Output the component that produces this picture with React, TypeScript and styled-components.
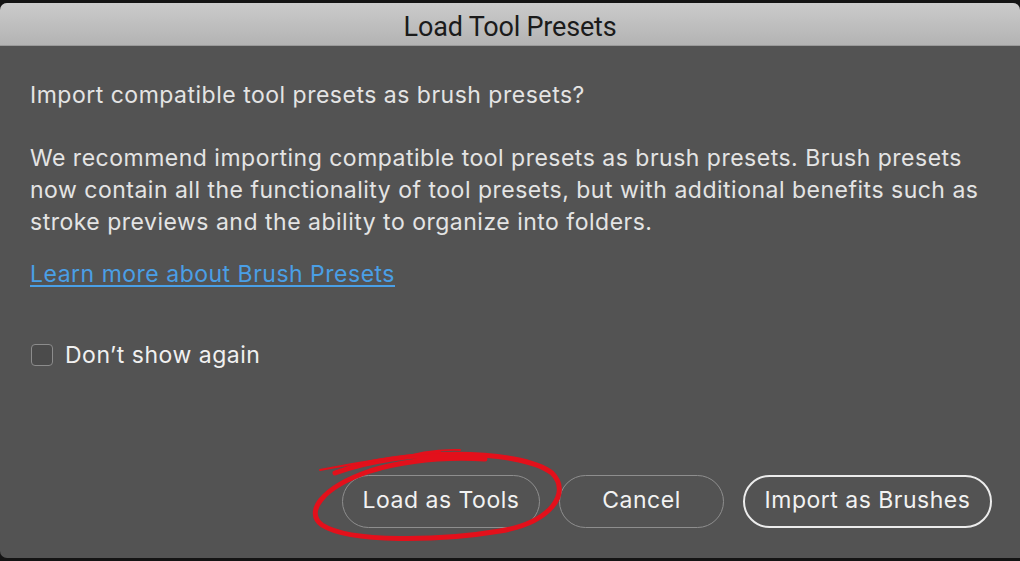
import React from "react";
import styled, { createGlobalStyle } from "styled-components";

const Global = createGlobalStyle`
  html, body { margin: 0; padding: 0; background: #141414; }
  body { font-family: "Inter", "Liberation Sans", sans-serif; }
`;

const Page = styled.div`
  width: 1020px;
  height: 561px;
  overflow: hidden;
  background: #141414;
  padding-top: 3px;
  box-sizing: border-box;
`;

const Window = styled.div`
  position: relative;
  width: 1020px;
  height: 555px;
  display: flex;
  flex-direction: column;
  background: #535353;
  border-radius: 7px 7px 0 7px;
  overflow: hidden;
`;

const TitleBar = styled.div`
  height: 43px;
  flex: none;
  display: flex;
  align-items: center;
  justify-content: center;
  background: linear-gradient(#cbcbcb, #b3b3b3);
  border-bottom: 1px solid #9a9a9a;
  font-family: "Roboto", "Liberation Sans", sans-serif;
  font-size: 27px;
  color: #1b1b1b;
  letter-spacing: -0.2px;
  padding-top: 5px;
  box-sizing: border-box;
`;

const Body = styled.div`
  flex: 1;
  display: flex;
  flex-direction: column;
  padding: 33px 28px 30px 30px;
  color: #e4e4e4;
  font-size: 23px;
  letter-spacing: 0.5px;
  line-height: 32px;
`;

const Para = styled.p<{ $gap?: number }>`
  margin: 0 0 ${(p) => p.$gap ?? 0}px 0;
  white-space: nowrap;
`;

const Link = styled.a`
  color: #4a9fe6;
  text-decoration: underline;
  text-underline-offset: 3px;
  align-self: flex-start;
  margin-bottom: 49px;
`;

const CheckRow = styled.label`
  display: flex;
  align-items: center;
  gap: 12px;
  color: #f0f0f0;
`;

const Box = styled.span`
  width: 20px;
  height: 20px;
  margin-left: 1px;
  border: 1.5px solid #8c8c8c;
  border-radius: 4px;
  background: #4b4b4b;
`;

const Footer = styled.div`
  margin-top: auto;
  display: flex;
  justify-content: flex-end;
  gap: 19px;
`;

const Button = styled.button<{ $primary?: boolean; $w: number }>`
  width: ${(p) => p.$w}px;
  height: 53px;
  border-radius: 27px;
  background: transparent;
  border: ${(p) => (p.$primary ? "2px solid #ececec" : "1.5px solid #8e8e8e")};
  color: #f2f2f2;
  font-family: inherit;
  font-size: 23px;
  letter-spacing: 0.5px;
  padding: 0 0 3px 0;
`;

const Scribble = styled.svg`
  position: absolute;
  left: 300px;
  top: 437px;
  width: 280px;
  height: 110px;
  pointer-events: none;
`;

export default function App() {
  return (
    <Page>
      <Global />
      <Window>
        <TitleBar>Load Tool Presets</TitleBar>
        <Body>
          <Para $gap={31}>Import compatible tool presets as brush presets?</Para>
          <Para $gap={20}>
            We recommend importing compatible tool presets as brush presets. Brush presets
            <br />
            now contain all the functionality of tool presets, but with additional benefits such as
            <br />
            stroke previews and the ability to organize into folders.
          </Para>
          <Link href="#">Learn more about Brush Presets</Link>
          <CheckRow>
            <Box />
            Don’t show again
          </CheckRow>
          <Footer>
            <Button $w={198}>Load as Tools</Button>
            <Button $w={165}>Cancel</Button>
            <Button $w={249} $primary>
              Import as Brushes
            </Button>
          </Footer>
        </Body>
        <Scribble viewBox="0 0 280 110">
          <path
            d="M 35 33 C 100 8, 220 8, 252 33 C 272 53, 250 83, 200 91 C 140 101, 50 103, 22 85 C 5 73, 20 48, 70 31 C 110 19, 150 17, 185 19"
            fill="none"
            stroke="#e3101b"
            strokeWidth="5"
            strokeLinecap="round"
          />
          <path
            d="M 20 30 C 60 22, 100 16, 140 12 M 95 20 C 115 13, 135 9, 160 10"
            fill="none"
            stroke="#e3101b"
            strokeWidth="1.8"
            strokeLinecap="round"
          />
        </Scribble>
      </Window>
    </Page>
  );
}
